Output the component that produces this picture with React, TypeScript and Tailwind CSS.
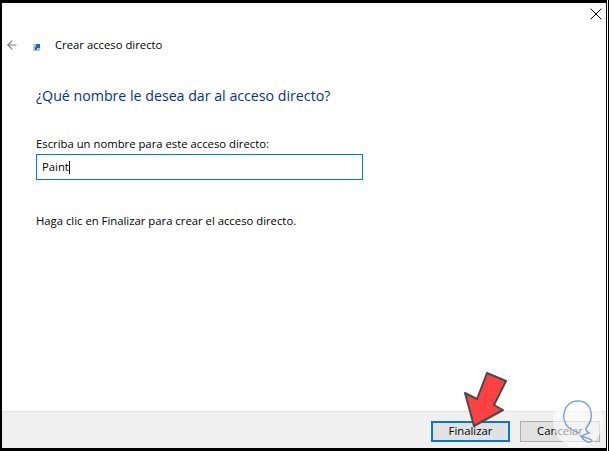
import { X, ArrowLeft } from 'lucide-react'

function ShortcutIcon() {
    return (
        <svg width="8" height="8" viewBox="0 0 8 8" className="shrink-0">
            <rect x="0" y="1" width="7" height="7" fill="#b9c4d4" />
            <rect x="3" y="1" width="4" height="4" fill="#0f6cbd" />
            <rect x="2" y="4" width="2" height="3" fill="#0f6cbd" />
        </svg>
    )
}

function Arrow() {
    return (
        <svg className="absolute left-[460px] top-[368px]" width="50" height="62" viewBox="0 0 50 62">
            <path d="M27 5 L46 13 L34 37 L43 42 L14 58 L5 25 L17 31 Z" fill="#fb4141" stroke="#4a4a4a" strokeWidth="2" strokeLinejoin="round" />
        </svg>
    )
}

function Watermark() {
    return (
        <div className="absolute left-[553px] top-[397px] w-[50px] h-[50px] rounded-full bg-white/60">
            <svg width="50" height="50" viewBox="0 0 50 50" fill="none" stroke="#7ba6cf" strokeWidth="1.5">
                <path d="M16 31 C6 22 11 4 25 4 C38 4 43 20 33 31 C33 33 34 35 36 36 L28 39 C32 41 38 41 39 44 C36 47 31 44 28 39 M16 31 C19 33 23 35 26 36" />
            </svg>
        </div>
    )
}

export default function App() {
    return (
        <div className="relative w-[609px] h-[451px] bg-white border-r border-black pr-px overflow-hidden font-['Open_Sans','Noto_Sans',sans-serif] text-[11.3px] text-black">
            <div className="h-full bg-white border-t-[3px] border-l-2 border-r border-b-[3px] border-black flex flex-col">
                <div className="flex justify-end pt-px pr-0 h-[23px]">
                    <X className="h-[20px] w-[20px] text-black" strokeWidth={1.2} />
                </div>

                <div className="flex items-center h-[38px] pl-[3px]">
                    <ArrowLeft className="h-[14px] w-[14px] text-[#808080]" strokeWidth={2} />
                    <div className="ml-[14px] mt-[4px]"><ShortcutIcon /></div>
                    <span className="ml-[14px]">Crear acceso directo</span>
                </div>

                <h1 className="pl-[34px] mt-[21px] text-[14.2px] leading-[22px] text-[#003399] font-normal">¿Qué nombre le desea dar al acceso directo?</h1>

                <label className="pl-[34px] mt-[29px] leading-[16px]">Escriba un nombre para este acceso directo:</label>
                <div className="ml-[34px] mt-[2px] w-[327px] h-[26px] border border-[#0078d7] flex items-center pl-[5px]">
                    <span>Paint</span>
                    <span className="w-px h-[13px] bg-black" />
                </div>

                <p className="pl-[34px] mt-[33px] leading-[16px]">Haga clic en Finalizar para crear el acceso directo.</p>

                <div className="mt-auto h-[37px] bg-[#f0f0f0] border-t border-[#dfdfdf] flex justify-end items-start gap-[10px] pt-[9px] pr-[6px]">
                    <button className="w-[79px] h-[21px] border-2 border-[#0078d7] bg-[#e1e1e1] flex items-center justify-center">Finalizar</button>
                    <button className="w-[80px] h-[21px] border border-[#adadad] bg-[#e1e1e1] flex items-center justify-center">Cancelar</button>
                </div>
            </div>

            <div className="absolute left-0 top-0 w-[609px] h-[451px]">
                <Arrow />
                <Watermark />
            </div>
        </div>
    )
}
